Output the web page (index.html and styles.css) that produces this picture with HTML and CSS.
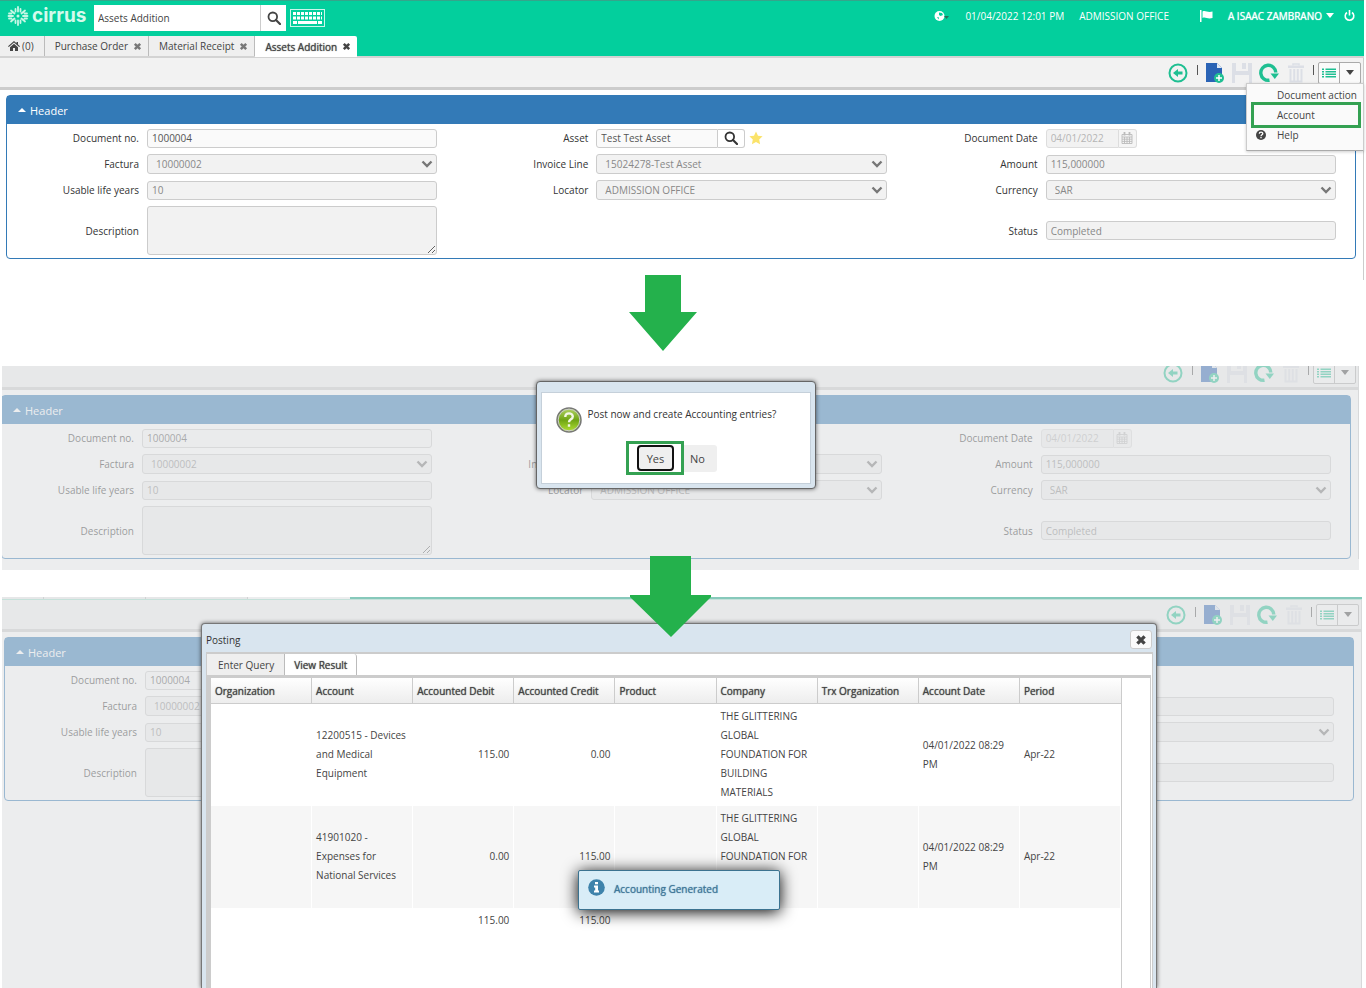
FILE: index.html
```html
<!DOCTYPE html>
<html lang="en">
<head>
  <meta charset="UTF-8">
  <title>Assets Addition</title>
  <link rel="stylesheet" href="styles.css">
</head>
<body>

  <!-- Shared icons -->
  <svg class="sprite" width="0" height="0">
    <symbol id="i-search" viewBox="0 0 14 14"><circle cx="5.8" cy="5.8" r="4.3" fill="none" stroke="currentColor" stroke-width="1.8"/><path d="M9 9l4 4" stroke="currentColor" stroke-width="2.2" stroke-linecap="round"/></symbol>
    <symbol id="i-close" viewBox="0 0 10 10"><path d="M2 2l6 6M8 2l-6 6" stroke="currentColor" stroke-width="2.8"/></symbol>
    <symbol id="i-down" viewBox="0 0 12 8"><path d="M1.5 1.5L6 6l4.5-4.5" fill="none" stroke="currentColor" stroke-width="2.4"/></symbol>
    <symbol id="i-caret" viewBox="0 0 8 5"><path d="M0 0h8L4 5z" fill="currentColor"/></symbol>
    <symbol id="i-calendar" viewBox="0 0 12 12"><path d="M1 2.5h10v9H1zM1 5h10M1 7.2h10M1 9.4h10M3.5 5v6.5M6 5v6.5M8.5 5v6.5" fill="none" stroke="currentColor" stroke-width=".9"/><path d="M3.5 0v3.5M8.5 0v3.5" stroke="currentColor" stroke-width="1.8"/></symbol>
    <symbol id="i-back" viewBox="0 0 20 20"><circle cx="10" cy="10" r="8.5" fill="none" stroke="#1fbf92" stroke-width="2"/><path d="M5 10l5-4v2.5h4.500v3H10V14z" fill="#1fbf92"/></symbol>
    <symbol id="i-new" viewBox="0 0 20 20"><path d="M1 0h11l5 5v14H1z" fill="#2a63b5"/><path d="M12 0l5 5h-5z" fill="#dfe8f3"/><circle cx="14" cy="15" r="5" fill="#1fbf92"/><path d="M14 12v6M11 15h6" stroke="#fff" stroke-width="1.5"/></symbol>
    <symbol id="i-save" viewBox="0 0 20 20"><path d="M0 0h4v8h12V0h4v20h-3v-8H3v8H0z" fill="#dcdfe6"/><path d="M10 0h4v6h-4z" fill="#dcdfe6"/></symbol>
    <symbol id="i-refresh" viewBox="0 0 20 20"><path d="M10.5 17.2A7.5 7.5 0 1 1 16.8 9.5" fill="none" stroke="#1fbf92" stroke-width="3.4"/><path d="M11.5 10.5H20l-4.2 5.5z" fill="#1fbf92"/></symbol>
    <symbol id="i-trash" viewBox="0 0 20 20"><path d="M7 2.5V1h6v1.5" fill="none" stroke="#dcdfe6" stroke-width="1.5"/><path d="M2 2.5h16V5H2z" fill="#dcdfe6"/><path d="M4.5 6v12.500h11V6M8.200 6v12M11.800 6v12" fill="none" stroke="#dcdfe6" stroke-width="2"/></symbol>
    <symbol id="i-list" viewBox="0 0 14 10"><path d="M0 1.200h2M0 3.700h2M0 6.200h2M0 8.700h2M3.500 1.200H14M3.500 3.700H14M3.500 6.200H14M3.500 8.700H14" stroke="#1fbf92" stroke-width="1.6"/></symbol>
  </svg>

  <!-- Step 1: open the account menu -->
  <section class="screen screen-one">
    <header class="topbar">
      <div class="brand">
        <svg width="22" height="20" viewBox="0 0 22 20" fill="none" stroke="#c9f7e6" stroke-width="1.8" stroke-linecap="round">
          <path d="M11 1v4.500M11 14.500V19M1.500 10H6M16 10h4.500M4 4.500L7.500 7.500M18 4.500L14.500 7.500M4 15.500l3.500-3M18 15.500l-3.500-3M8.500 3v2.500M13.500 3v2.500M8.500 14.500V17M13.500 14.500V17M2 7.500h2.500M17.500 7.500H20M2 12.500h2.500M17.500 12.500H20"/>
          <circle cx="11" cy="10" r="1.5" fill="#c9f7e6" stroke="none"/>
        </svg>
        <span>cirrus</span>
      </div>
      <div class="global-search">
        <input type="text" value="Assets Addition" aria-label="Search menu">
        <button type="button" aria-label="Search"><svg width="14" height="14"><use href="#i-search"/></svg></button>
      </div>
      <button class="keyboard" type="button" aria-label="Keyboard">
        <svg width="35" height="18" viewBox="0 0 35 18" fill="none" stroke="#fff">
          <rect x=".5" y=".5" width="34" height="17" stroke-opacity=".8"/>
          <path d="M3 4.500h29M3 9h29" stroke-width="3" stroke-dasharray="3 1"/>
          <path d="M3 13.500h4M8 13.500h19M28 13.500h4" stroke-width="3"/>
        </svg>
      </button>
      <div class="user-info">
        <svg class="globe" width="15" height="12" viewBox="0 0 15 12"><circle cx="5.5" cy="6" r="5" fill="#fff"/><path d="M5 2.500l3 .5 1 2-2.500 1-1.500-1zM3 7l2 .5-.5 2z" fill="#03cf9d"/><path d="M10 6h5l-2.500 3z" fill="#2c6f5c"/></svg>
        <span class="datetime">01/04/2022 12:01 PM</span>
        <span class="office">ADMISSION OFFICE</span>
        <svg class="flag" width="13" height="12" viewBox="0 0 13 12" fill="#fff"><path d="M0 0h1.500v12H0zM2.500 1.500c3-1.500 5 1.500 10 0v6.500c-5 1.500-7-1.500-10 0z"/></svg>
        <a class="user" href="#">A ISAAC ZAMBRANO <svg width="8" height="5"><use href="#i-caret"/></svg></a>
        <a class="power" href="#" aria-label="Log out"><svg width="11" height="12" viewBox="0 0 11 12" fill="none" stroke="#fff" stroke-width="1.6"><path d="M3 2.500a4.300 4.300 0 1 0 5 0M5.500 0v5.500"/></svg></a>
      </div>
    </header>
    <nav class="tabs">
      <a class="tab home" href="#"><svg width="12" height="10" viewBox="0 0 12 10" fill="#444"><path d="M6 0l2.500 2.200V1H10v2.500L12 5.300l-.8.800L6 1.600.8 6.100 0 5.300z"/><path d="M6 2.700l4 3.500V10H7V7H5v3H2V6.200z"/></svg>(0)</a>
      <a class="tab" href="#">Purchase Order<svg width="9" height="9"><use href="#i-close"/></svg></a>
      <a class="tab" href="#">Material Receipt<svg width="9" height="9"><use href="#i-close"/></svg></a>
      <a class="tab active" href="#">Assets Addition<svg width="9" height="9"><use href="#i-close"/></svg></a>
    </nav>
    <div class="workspace">
      <div class="toolbar">
        <button class="back" type="button" aria-label="Back"><svg width="20" height="20"><use href="#i-back"/></svg></button>
        <span class="sep"></span>
        <button type="button" aria-label="New"><svg width="20" height="20"><use href="#i-new"/></svg></button>
        <button type="button" aria-label="Save"><svg width="20" height="20"><use href="#i-save"/></svg></button>
        <button type="button" aria-label="Refresh"><svg width="20" height="20"><use href="#i-refresh"/></svg></button>
        <button type="button" aria-label="Delete"><svg width="20" height="20"><use href="#i-trash"/></svg></button>
        <span class="sep"></span>
        <div class="split">
          <button type="button" aria-label="List"><svg width="14" height="10"><use href="#i-list"/></svg></button>
          <button type="button" aria-label="More"><svg width="8" height="5"><use href="#i-caret"/></svg></button>
        </div>
        <div class="menu">
          <button type="button"><span class="menu-icon"></span>Document action</button>
          <button type="button" class="marked"><span class="menu-icon"></span>Account</button>
          <button type="button"><span class="menu-icon"><svg width="10" height="10" viewBox="0 0 10 10"><circle cx="5" cy="5" r="5" fill="#444"/><path d="M3.300 3.800c0-2.300 3.500-2.100 3.500-.2C6.800 4.800 5 4.800 5 6.200M5 7v1.200" fill="none" stroke="#fff" stroke-width="1.3"/></svg></span>Help</button>
        </div>
      </div>
      <div class="panel">
        <div class="panel-head"><svg width="8" height="4" viewBox="0 0 8 4"><path d="M0 4h8L4 0z" fill="#fff"/></svg>Header</div>
        <form class="fields">
          <div class="field"><label for="docno1">Document no.</label><input class="editable" id="docno1" type="text" value="1000004"></div>
          <div class="field"><label for="asset1">Asset</label><span class="lookup"><input class="editable" id="asset1" type="text" value="Test Test Asset"><button type="button" aria-label="Find asset"><svg width="14" height="14"><use href="#i-search"/></svg></button></span><svg class="star" width="14" height="14" viewBox="0 0 14 14"><path d="M7 .5l2 4.300 4.600.5-3.400 3.200.9 4.700L7 10.900l-4.100 2.300.9-4.700L.4 5.300 5 4.800z" fill="#fbe36a"/></svg></div>
          <div class="field"><label for="date1">Document Date</label><span class="date"><input id="date1" type="text" value="04/01/2022" disabled><button type="button" aria-label="Pick date" disabled><svg width="12" height="12"><use href="#i-calendar"/></svg></button></span></div>
          <div class="field"><label for="factura1">Factura</label><span class="select"><select id="factura1" disabled><option>10000002</option></select><svg width="12" height="8"><use href="#i-down"/></svg></span></div>
          <div class="field"><label for="line1">Invoice Line</label><span class="select"><select id="line1" disabled><option>15024278-Test Asset</option></select><svg width="12" height="8"><use href="#i-down"/></svg></span></div>
          <div class="field"><label for="amount1">Amount</label><input id="amount1" type="text" value="115,000000" disabled></div>
          <div class="field"><label for="life1">Usable life years</label><input id="life1" type="text" value="10" disabled></div>
          <div class="field"><label for="locator1">Locator</label><span class="select"><select id="locator1" disabled><option>ADMISSION OFFICE</option></select><svg width="12" height="8"><use href="#i-down"/></svg></span></div>
          <div class="field"><label for="currency1">Currency</label><span class="select"><select id="currency1" disabled><option>SAR</option></select><svg width="12" height="8"><use href="#i-down"/></svg></span></div>
          <div class="field"><label for="desc1">Description</label><textarea id="desc1" disabled></textarea></div>
          <div class="field"></div>
          <div class="field"><label for="status1">Status</label><input id="status1" type="text" value="Completed" disabled></div>
        </form>
      </div>
    </div>
  </section>

  <div class="step-gap first-gap">
    <svg class="arrow" width="68" height="76" viewBox="0 0 68 76"><path d="M16 0h36v37h16L34 76 0 37h16z" fill="#24b14c"/></svg>
  </div>

  <!-- Step 2: confirm the posting -->
  <section class="screen screen-two">
    <div class="workspace">
      <div class="toolbar">
        <button class="back" type="button" aria-label="Back"><svg width="20" height="20"><use href="#i-back"/></svg></button>
        <span class="sep"></span>
        <button type="button" aria-label="New"><svg width="20" height="20"><use href="#i-new"/></svg></button>
        <button type="button" aria-label="Save"><svg width="20" height="20"><use href="#i-save"/></svg></button>
        <button type="button" aria-label="Refresh"><svg width="20" height="20"><use href="#i-refresh"/></svg></button>
        <button type="button" aria-label="Delete"><svg width="20" height="20"><use href="#i-trash"/></svg></button>
        <span class="sep"></span>
        <div class="split">
          <button type="button" aria-label="List"><svg width="14" height="10"><use href="#i-list"/></svg></button>
          <button type="button" aria-label="More"><svg width="8" height="5"><use href="#i-caret"/></svg></button>
        </div>
      </div>
      <div class="panel">
        <div class="panel-head"><svg width="8" height="4" viewBox="0 0 8 4"><path d="M0 4h8L4 0z" fill="#fff"/></svg>Header</div>
        <form class="fields">
          <div class="field"><label for="docno2">Document no.</label><input class="editable" id="docno2" type="text" value="1000004"></div>
          <div class="field"></div>
          <div class="field"><label for="date2">Document Date</label><span class="date"><input id="date2" type="text" value="04/01/2022" disabled><button type="button" aria-label="Pick date" disabled><svg width="12" height="12"><use href="#i-calendar"/></svg></button></span></div>
          <div class="field"><label for="factura2">Factura</label><span class="select"><select id="factura2" disabled><option>10000002</option></select><svg width="12" height="8"><use href="#i-down"/></svg></span></div>
          <div class="field"><label for="line2">Invoice Line</label><span class="select"><select id="line2" disabled><option>15024278-Test Asset</option></select><svg width="12" height="8"><use href="#i-down"/></svg></span></div>
          <div class="field"><label for="amount2">Amount</label><input id="amount2" type="text" value="115,000000" disabled></div>
          <div class="field"><label for="life2">Usable life years</label><input id="life2" type="text" value="10" disabled></div>
          <div class="field"><label for="locator2">Locator</label><span class="select"><select id="locator2" disabled><option>ADMISSION OFFICE</option></select><svg width="12" height="8"><use href="#i-down"/></svg></span></div>
          <div class="field"><label for="currency2">Currency</label><span class="select"><select id="currency2" disabled><option>SAR</option></select><svg width="12" height="8"><use href="#i-down"/></svg></span></div>
          <div class="field"><label for="desc2">Description</label><textarea id="desc2" disabled></textarea></div>
          <div class="field"></div>
          <div class="field"><label for="status2">Status</label><input id="status2" type="text" value="Completed" disabled></div>
        </form>
      </div>
    </div>
    <div class="mask"></div>
    <div class="confirm" role="dialog">
      <div class="confirm-body">
        <div class="question">
          <svg width="26" height="26" viewBox="0 0 26 26">
            <defs><linearGradient id="lime" x1="0" y1="0" x2="0" y2="1"><stop offset="0" stop-color="#b5d66a"/><stop offset=".5" stop-color="#6fa414"/><stop offset="1" stop-color="#b4e336"/></linearGradient></defs>
            <circle cx="13" cy="13" r="12" fill="url(#lime)" stroke="#777" stroke-width="1.5"/>
            <circle cx="13" cy="13" r="10.8" fill="none" stroke="#ccc" stroke-width="1"/>
            <path d="M9.300 10c0-5 7.500-4.500 7.500-.5 0 3-3.800 2.600-3.800 5.700M13 17.200v2.500" fill="none" stroke="#f3f7e6" stroke-width="2.4"/>
          </svg>
          <span>Post now and create Accounting entries?</span>
        </div>
        <div class="answers">
          <span class="marked"><button type="button" class="yes">Yes</button></span><button type="button" class="no">No</button>
        </div>
      </div>
    </div>
  </section>

  <div class="step-gap second-gap">
    <svg class="arrow" width="81" height="81" viewBox="0 0 81 81"><path d="M20 0h41v39h20v2L41 81 0 41v-2h20z" fill="#24b14c"/></svg>
  </div>

  <!-- Step 3: posting result -->
  <section class="screen screen-three">
    <div class="tab-edge"><span></span><span></span><span></span><span></span></div>
    <div class="workspace">
      <div class="toolbar">
        <button class="back" type="button" aria-label="Back"><svg width="20" height="20"><use href="#i-back"/></svg></button>
        <span class="sep"></span>
        <button type="button" aria-label="New"><svg width="20" height="20"><use href="#i-new"/></svg></button>
        <button type="button" aria-label="Save"><svg width="20" height="20"><use href="#i-save"/></svg></button>
        <button type="button" aria-label="Refresh"><svg width="20" height="20"><use href="#i-refresh"/></svg></button>
        <button type="button" aria-label="Delete"><svg width="20" height="20"><use href="#i-trash"/></svg></button>
        <span class="sep"></span>
        <div class="split">
          <button type="button" aria-label="List"><svg width="14" height="10"><use href="#i-list"/></svg></button>
          <button type="button" aria-label="More"><svg width="8" height="5"><use href="#i-caret"/></svg></button>
        </div>
      </div>
      <div class="panel">
        <div class="panel-head"><svg width="8" height="4" viewBox="0 0 8 4"><path d="M0 4h8L4 0z" fill="#fff"/></svg>Header</div>
        <form class="fields">
          <div class="field"><label for="docno3">Document no.</label><input class="editable" id="docno3" type="text" value="1000004"></div>
          <div class="field"></div>
          <div class="field"></div>
          <div class="field"><label for="factura3">Factura</label><span class="select"><select id="factura3" disabled><option>10000002</option></select></span></div>
          <div class="field"></div>
          <div class="field"><input class="no-label" type="text" aria-label="Amount" disabled></div>
          <div class="field"><label for="life3">Usable life years</label><input id="life3" type="text" value="10" disabled></div>
          <div class="field"></div>
          <div class="field"><span class="select no-label"><select aria-label="Currency" disabled><option></option></select><svg width="12" height="8"><use href="#i-down"/></svg></span></div>
          <div class="field"><label for="desc3">Description</label><textarea id="desc3" disabled></textarea></div>
          <div class="field"></div>
          <div class="field"><input class="no-label" type="text" aria-label="Status" disabled></div>
        </form>
      </div>
    </div>
    <div class="mask"></div>
    <div class="window" role="dialog">
      <div class="window-head">
        <span>Posting</span>
        <button type="button" aria-label="Close"><svg width="12" height="12"><use href="#i-close"/></svg></button>
      </div>
      <div class="window-body">
        <div class="window-tabs">
          <button type="button">Enter Query</button>
          <button type="button" class="active">View Result</button>
        </div>
        <div class="result">
          <div class="grid">
            <table>
              <thead>
                <tr><th>Organization</th><th>Account</th><th>Accounted Debit</th><th>Accounted Credit</th><th>Product</th><th>Company</th><th>Trx Organization</th><th>Account Date</th><th>Period</th></tr>
              </thead>
              <tbody>
                <tr><td></td><td>12200515 - Devices and Medical Equipment</td><td class="num">115.00</td><td class="num">0.00</td><td></td><td>THE GLITTERING GLOBAL FOUNDATION FOR BUILDING MATERIALS</td><td></td><td>04/01/2022 08:29 PM</td><td>Apr-22</td></tr>
                <tr class="odd"><td></td><td>41901020 - Expenses for National Services</td><td class="num">0.00</td><td class="num">115.00</td><td></td><td>THE GLITTERING GLOBAL FOUNDATION FOR BUILDING MATERIALS</td><td></td><td>04/01/2022 08:29 PM</td><td>Apr-22</td></tr>
                <tr><td></td><td></td><td class="num">115.00</td><td class="num">115.00</td><td></td><td></td><td></td><td></td><td></td></tr>
              </tbody>
            </table>
          </div>
        </div>
      </div>
    </div>
    <div class="toast" role="status">
      <svg width="17" height="17" viewBox="0 0 17 17"><circle cx="8.5" cy="8.5" r="8.3" fill="#3f83ab"/><path d="M7 3h3v2.300H7zM6 6.500h4v5h1v2H6v-2h1.200v-3H6z" fill="#fff"/></svg>
      <span>Accounting Generated</span>
    </div>
  </section>

</body>
</html>
```

FILE: styles.css
```css
* {
  box-sizing: border-box;
}
body {
  margin: 0;
  min-height: 100vh;
  display: flex;
  flex-direction: column;
  font-family: "Open Sans", "Noto Sans", sans-serif;
  font-size: 10px;
  color: #444;
  background: #fff;
}
button, input, select, textarea {
  font: inherit;
  color: inherit;
  margin: 0;
}
button {
  padding: 0;
  border: none;
  background: none;
}
a {
  color: inherit;
  text-decoration: none;
}
svg {
  display: block;
  flex: none;
}
.sprite {
  position: absolute;
}
.screen {
  position: relative;
}
.screen-one {
  margin-right: 2px;
  min-height: 280px;
  display: flex;
  flex-direction: column;
}
.screen-two {
  margin: 0 7px 0 2px;
  overflow: hidden;
}
.screen-three {
  margin: 0 4px 0 2px;
  flex: 1;
  min-height: 391px;
  overflow: hidden;
  display: flex;
  flex-direction: column;
}

/* top bar */
.topbar {
  display: flex;
  align-items: center;
  height: 36px;
  padding-bottom: 2px;
  border-top: 1px solid #35a58b;
  background: #03cf9d;
  color: #fff;
}
.brand {
  display: flex;
  align-items: center;
  gap: 3px;
  width: 94px;
  padding-left: 7px;
  padding-bottom: 4px;
  font-family: Inter, "Open Sans", sans-serif;
  font-size: 19px;
  font-weight: 700;
  line-height: 20px;
  color: #d5faec;
}
.global-search {
  display: flex;
  width: 192px;
  height: 26px;
  background: #fff;
}
.global-search input {
  flex: 1;
  min-width: 0;
  padding: 0 4px;
  border: none;
  border-right: 1px solid #ccc;
  background: #fff;
  color: #444;
}
.global-search button {
  display: flex;
  align-items: center;
  justify-content: center;
  width: 25px;
  color: #444;
}
.keyboard {
  margin-left: 4px;
}
.user-info {
  display: flex;
  align-items: center;
  margin-left: auto;
  padding-right: 9px;
  padding-bottom: 4px;
}
.datetime {
  margin-left: 16px;
}
.office {
  margin-left: 15px;
}
.flag {
  margin-left: 31px;
}
.user {
  display: flex;
  align-items: center;
  gap: 4px;
  margin-left: 15px;
  text-shadow: 0 0 1px #fff;
}
.power {
  margin-left: 10px;
}

/* document tabs */
.tabs {
  display: flex;
  height: 22px;
  background: #03cf9d;
  border-bottom: 2px solid #d3d3d3;
}
.tab {
  display: flex;
  align-items: center;
  gap: 5px;
  height: 20px;
  padding: 0 6px 0 10px;
  border-right: 1px solid #bbb;
  background: #efefef;
  white-space: nowrap;
}
.tab svg {
  color: #777;
}
.tab.home {
  gap: 2px;
  padding: 0 10px 0 8px;
}
.tab.active {
  height: 21px;
  background: #fff;
  border-right: none;
  border-radius: 0 2px 0 0;
  text-shadow: 0 0 1px #444;
}
.tab.active svg {
  color: #444;
}

/* work area */
.workspace {
  flex: 1;
  border-right: 1px solid #ccc;
}
.toolbar {
  position: relative;
  display: flex;
  align-items: center;
  justify-content: flex-end;
  gap: 7px;
  height: 32px;
  padding-right: 2px;
  border-bottom: 3px solid #ccc;
  background: #f2f2f2;
}
.back {
  margin-right: 2px;
}
.sep {
  width: 1px;
  height: 10px;
  margin-bottom: 6px;
  background: #555;
}
.split {
  display: flex;
  margin-left: -3px;
  border: 1px solid #aaa;
  border-radius: 2px;
  background: #fafafa;
}
.split button {
  display: flex;
  align-items: center;
  justify-content: center;
  width: 20px;
  height: 20px;
}
.split button:first-child {
  width: 21px;
  border-right: 1px solid #aaa;
}
.menu {
  position: absolute;
  top: 25px;
  right: -1px;
  z-index: 3;
  width: 118px;
  padding: 1px 5px 5px 7px;
  border: 1px solid #ccc;
  border-bottom-color: #aaa;
  background: #fafafa;
  box-shadow: 0 1px 3px rgba(0,0,0,0.2);
}
.menu button {
  display: flex;
  align-items: center;
  width: 100%;
  height: 20px;
  padding-left: 2px;
  white-space: nowrap;
}
.menu .marked {
  outline: 3px solid #34a152;
}
.menu-icon {
  flex: none;
  width: 21px;
}
.panel {
  margin: 5px 7px 0 6px;
  border: 1px solid #337ab7;
  border-radius: 4px;
  background: #fff;
}
.panel-head {
  display: flex;
  align-items: center;
  gap: 4px;
  height: 28px;
  padding-left: 11px;
  background: #337ab7;
  color: #fff;
  font-size: 11px;
}
.fields {
  display: grid;
  grid-template-columns: repeat(3, 1fr);
  row-gap: 6px;
  margin: 0;
  padding: 4px 0 3px;
}
.field {
  display: flex;
  align-items: center;
  min-height: 20px;
  padding-right: 19px;
  color: #333;
}
.field label {
  width: 132px;
  margin-right: 8px;
  flex: none;
  text-align: right;
}
.field input, .field select, .field textarea {
  flex: 1;
  min-width: 0;
  width: 100%;
  height: 19px;
  padding: 0 4px;
  border: 1px solid #ccc;
  border-radius: 3px;
  background: #f2f2f2;
  color: #888;
  opacity: 1;
}
.field .editable {
  background: #fafafa;
  color: #555;
}
.field textarea {
  display: block;
  height: 49px;
  resize: vertical;
}
.field select {
  appearance: none;
  height: 20px;
  padding: 0 8px;
}
.select {
  position: relative;
  display: flex;
  flex: 1;
}
.select svg {
  position: absolute;
  top: 6px;
  right: 4px;
  color: #777;
}
.lookup {
  display: flex;
  width: 149px;
}
.lookup .editable, .date input {
  border-radius: 3px 0 0 3px;
}
.lookup button, .date button {
  display: flex;
  align-items: center;
  justify-content: center;
  width: 27px;
  height: 19px;
  border: 1px solid #ccc;
  border-left: none;
  border-radius: 0 3px 3px 0;
  background: #fff;
}
.star {
  margin-left: 4px;
}
.date {
  display: flex;
  width: 91px;
}
.date input {
  border-color: #ddd;
  color: #b5b5b5;
}
.date button {
  width: 18px;
  border-color: #ddd;
  background: #f5f5f5;
  color: #bbb;
}
.no-label {
  margin-left: 140px;
}

/* gaps between the steps */
.step-gap {
  position: relative;
}
.first-gap {
  height: 86px;
}
.second-gap {
  height: 27px;
}
.arrow {
  position: absolute;
  z-index: 5;
}
.first-gap .arrow {
  top: -5px;
  left: calc(50% - 54px);
}
.second-gap .arrow {
  top: -14px;
  left: calc(50% - 53px);
}
.mask {
  position: absolute;
  inset: 0;
  background: rgba(224,225,227,0.6);
}

/* confirmation */
.screen-two .toolbar {
  margin-top: -8px;
}
.screen-two .panel {
  margin-left: -1px;
  margin-bottom: 11px;
}
.confirm {
  position: absolute;
  top: 15px;
  left: calc(50% - 145px);
  width: 280px;
  padding: 10px 4px 4px;
  border: 1px solid #666;
  border-radius: 4px;
  background: #d9e5ef;
  box-shadow: 0 0 4px rgba(0,0,0,0.6);
}
.confirm-body {
  height: 92px;
  border: 1px solid #c5d0da;
  background: #fff;
  padding: 14px;
}
.question {
  display: flex;
  gap: 6px;
  height: 34px;
  line-height: 14px;
  color: #333;
}
.answers {
  display: flex;
  align-items: center;
  justify-content: center;
  margin-right: 8px;
  font-size: 11px;
}
.answers .marked {
  display: flex;
  align-items: center;
  padding: 1px 7px 1px 8px;
  border: 3px solid #34a152;
}
.answers .yes {
  width: 37px;
  height: 26px;
  border: 2px solid #111;
  border-radius: 4px;
  background: #efefef;
}
.answers .no {
  width: 33px;
  height: 27px;
  padding-right: 6px;
  border-radius: 0 3px 3px 0;
  background: #efefef;
}

/* posting window */
.tab-edge {
  display: flex;
  height: 3px;
  background: #03a57f;
  border-bottom: 1px solid #9fe0cd;
}
.tab-edge span {
  width: 102px;
  border-right: 1px solid #bbb;
  background: #efefef;
}
.tab-edge span:first-child {
  width: 42px;
}
.tab-edge span:last-child {
  border-right: none;
  background: #fff;
}
.screen-three .panel {
  margin-left: 2px;
}
.window {
  position: absolute;
  top: 26px;
  left: 199px;
  right: 205px;
  bottom: 0;
  display: flex;
  flex-direction: column;
  padding: 0 3px 0 4px;
  border: 1px solid #777;
  border-bottom: none;
  border-radius: 4px 4px 0 0;
  background: #d9e5ef;
  box-shadow: 0 0 4px rgba(0,0,0,0.6);
}
.window-head {
  display: flex;
  align-items: center;
  justify-content: space-between;
  height: 28px;
  padding-top: 3px;
  padding-right: 1px;
  color: #333;
}
.window-head button {
  display: flex;
  align-items: center;
  justify-content: center;
  width: 22px;
  height: 19px;
  border: 1px solid #ccc;
  border-radius: 3px;
  background: #fafafa;
  color: #444;
}
.window-body {
  flex: 1;
  display: flex;
  flex-direction: column;
  padding-right: 1px;
  border-top: 2px solid #ccc;
  border-left: 1px solid #ccc;
  border-right: 1px solid #ccc;
  background: #fff;
}
.window-tabs {
  display: flex;
  height: 21px;
}
.window-tabs button {
  padding: 0 10px 0 11px;
  border-right: 1px solid #bbb;
  background: #efefef;
}
.window-tabs .active {
  padding: 0 9px;
  background: #fff;
  border-radius: 0 3px 0 0;
  text-shadow: 0 0 1px #444;
}
.result {
  flex: 1;
  display: flex;
  padding-right: 28px;
  border: 1px solid #ccc;
  border-top-width: 3px;
  border-left-width: 4px;
  border-bottom: none;
}
.grid {
  flex: 1;
  border-right: 1px solid #ccc;
}
.grid table {
  width: 100%;
  table-layout: fixed;
  border-collapse: separate;
  border-spacing: 0;
}
.grid th {
  height: 26px;
  padding: 0 4px;
  border-right: 1px solid #ccc;
  border-bottom: 1px solid #ccc;
  background: linear-gradient(#fff, #ededed);
  text-align: left;
  font-weight: 400;
  text-shadow: 0 0 1px #444;
  white-space: nowrap;
}
.grid th:last-child {
  border-right: none;
}
.grid td {
  padding: 3px 4px 4px;
  border-right: 1px solid #fff;
  line-height: 19px;
  vertical-align: middle;
}
.grid .odd td {
  background: #f6f6f6;
}
.grid .num {
  text-align: right;
}
.toast {
  position: absolute;
  top: 273px;
  left: 576px;
  display: flex;
  gap: 9px;
  width: 202px;
  height: 40px;
  padding: 8px 9px;
  border: 1px solid #3b7390;
  border-radius: 2px;
  background: #d9edf7;
  box-shadow: 0 2px 16px #000;
  color: #3f7799;
  text-shadow: 0 0 1px #3f7799;
  line-height: 21px;
}
```
